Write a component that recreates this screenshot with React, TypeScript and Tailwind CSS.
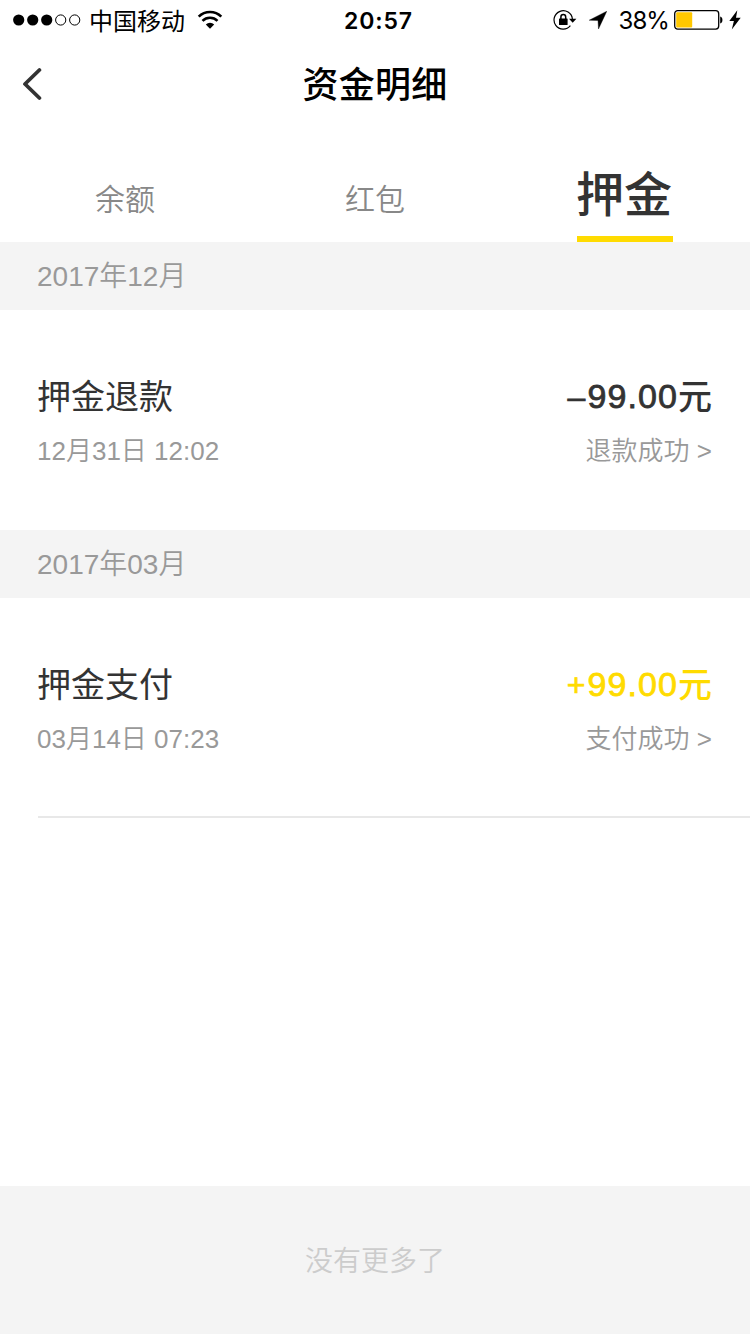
import React from 'react';

interface FundRecord {
  title: string;
  time: string;
  sign: string;
  amount: string;
  status: string;
  income?: boolean;
}

interface MonthGroup { month: string; records: FundRecord[]; }

const TABS = ['余额', '红包', '押金'];
const ACTIVE_TAB = '押金';

const GROUPS: MonthGroup[] = [
  {
    month: '2017年12月',
    records: [{ title: '押金退款', time: '12月31日 12:02', sign: '–', amount: '99.00', status: '退款成功' }],
  },
  {
    month: '2017年03月',
    records: [{ title: '押金支付', time: '03月14日 07:23', sign: '+', amount: '99.00', status: '支付成功', income: true }],
  },
];

function SignalDots() {
  return (
    <svg width="68" height="12" viewBox="0 0 68 12">
      {[0, 1, 2].map((i) => <circle key={i} cx={5.7 + i * 14} cy="6" r="5.6" fill="#000" />)}
      {[3, 4].map((i) => <circle key={i} cx={5.7 + i * 14} cy="6" r="5.1" fill="none" stroke="#000" />)}
    </svg>
  );
}

function WifiIcon() {
  return (
    <svg width="26" height="20" viewBox="0 0 26 20" fill="none" stroke="#000" strokeWidth="2.6">
      <path d="M1.7 6.6a16 16 0 0 1 22.6 0" />
      <path d="M5.5 10.8a10.6 10.6 0 0 1 15 0" />
      <path d="M13 18.8l-4.2-4.4a6 6 0 0 1 8.4 0z" fill="#000" stroke="none" />
    </svg>
  );
}

function RotationLockIcon() {
  return (
    <svg width="24" height="20" viewBox="0 0 24 20" fill="none" stroke="#000">
      <path d="M17.4 15.7A9.2 9.2 0 1 1 19.4 9" strokeWidth="1.2" />
      <path d="M16 8.8h7.4l-3.7 4z" fill="#000" stroke="none" />
      <rect x="6" y="8.4" width="8.6" height="6.6" rx="0.6" fill="#000" stroke="none" />
      <path d="M7.9 9V6.9a2.4 2.4 0 0 1 4.8 0V9" strokeWidth="1.5" />
    </svg>
  );
}

function StatusBar() {
  return (
    <div className="grid h-10 grid-cols-3 items-center text-black">
      <div className="flex items-center pl-[13px]">
        <SignalDots />
        <span className="ml-2 pt-[3px] text-[24px] leading-[37px]">中国移动</span>
        <span className="ml-3"><WifiIcon /></span>
      </div>
      <div className="pt-[2px] pl-[7px] text-center font-['Inter'] text-[23px] leading-[38px] font-semibold tracking-[0.9px]">20:57</div>
      <div className="flex items-center justify-end pr-[9px]">
        <RotationLockIcon />
        <svg className="ml-[12px]" width="18" height="18" viewBox="0 0 18 18">
          <path d="M17.8 0.2L0.2 9.2l8.8.2.5 8.6z" fill="#000" stroke="#000" strokeWidth="0.4" />
        </svg>
        <span className="ml-[11px] pt-[2px] font-['Inter'] text-[24px] leading-[38px] tracking-[-0.9px]">38%</span>
        <svg className="ml-[5px]" width="49" height="20" viewBox="0 0 49 20">
          <rect x="0.7" y="0.7" width="44" height="18.4" rx="3" fill="none" stroke="#000" strokeWidth="1.3" />
          <rect x="2.2" y="2.2" width="16" height="15.4" rx="1" fill="#ffc800" />
          <path d="M46.2 6.6c3 .6 3 6.2 0 6.8z" fill="#000" />
        </svg>
        <svg className="ml-[6px]" width="12" height="20" viewBox="0 0 12 20">
          <path d="M8.3 0.2L0.3 11h4.6L2.8 19.5 11.7 7.7H7z" fill="#000" />
        </svg>
      </div>
    </div>
  );
}

function NavBar() {
  return (
    <header className="grid h-[88px] grid-cols-[60px_1fr_60px] items-center">
      <button className="pl-[22px]" aria-label="返回">
        <svg width="20" height="34" viewBox="0 0 20 34" fill="none" stroke="#333" strokeWidth="3.8" strokeLinecap="round" strokeLinejoin="round">
          <path d="M17.4 3L3 17l14.4 14" />
        </svg>
      </button>
      <h1 className="pt-[4px] text-center text-[36px] leading-[84px] font-medium tracking-[0.3px] text-black">资金明细</h1>
    </header>
  );
}

function Tabs() {
  return (
    <nav className="grid h-[114px] grid-cols-3 justify-items-center">
      {TABS.map((tab) =>
        tab === ACTIVE_TAB ? (
          <button key={tab} className="h-full border-b-6 border-[#ffdb00] pt-[28px] text-[48px] leading-[48px] font-medium text-[#333]">
            <span className="relative -left-px">{tab}</span>
          </button>
        ) : (
          <button key={tab} className="pt-[30px] text-[30px] leading-[40px] font-[350] text-[#888]">{tab}</button>
        ),
      )}
    </nav>
  );
}

function RecordRow({ record }: { record: FundRecord }) {
  return (
    <div className="flex h-[220px] justify-between pt-[62px] pr-[38px] pl-[37px]">
      <div>
        <div className="text-[34px] leading-[50px] text-[#333]">{record.title}</div>
        <div className="mt-[9px] text-[26px] leading-[40px] font-[350] text-[#999]">{record.time}</div>
      </div>
      <div className="text-right">
        <div className={`flex items-baseline justify-end leading-[50px] font-medium ${record.income ? 'text-[#ffdb00]' : 'text-[#333]'}`}>
          <span className="relative -top-px mr-[2px] text-[32px] [-webkit-text-stroke:0.7px_currentColor]">{record.sign}</span>
          <span className="relative -top-px text-[34px] tracking-[1.1px] [-webkit-text-stroke:0.8px_currentColor]">{record.amount}</span>
          <span className="text-[34px]">元</span>
        </div>
        <div className="mt-[8px] text-[26px] leading-[40px] font-[350] text-[#999]">{record.status} &gt;</div>
      </div>
    </div>
  );
}

export default function App() {
  return (
    <div className="flex h-[1334px] w-[750px] flex-col bg-white font-['Liberation_Sans','Noto_Sans_CJK_SC',sans-serif]">
      <StatusBar />
      <NavBar />
      <Tabs />
      <main className="flex-1">
        {GROUPS.map((group) => (
          <section key={group.month}>
            <h2 className="h-[68px] bg-[#f4f4f4] pt-px pl-[37px] text-[28px] leading-[68px] font-[350] text-[#999]">{group.month}</h2>
            {group.records.map((record) => <RecordRow key={record.time} record={record} />)}
          </section>
        ))}
        <div className="-mt-[2px] ml-[38px] h-[2px] bg-[#e8e8e8]" />
      </main>
      <footer className="h-[148px] bg-[#f4f4f4] pt-[2px] text-center text-[28px] leading-[148px] font-[350] text-[#ccc]">没有更多了</footer>
    </div>
  );
}
